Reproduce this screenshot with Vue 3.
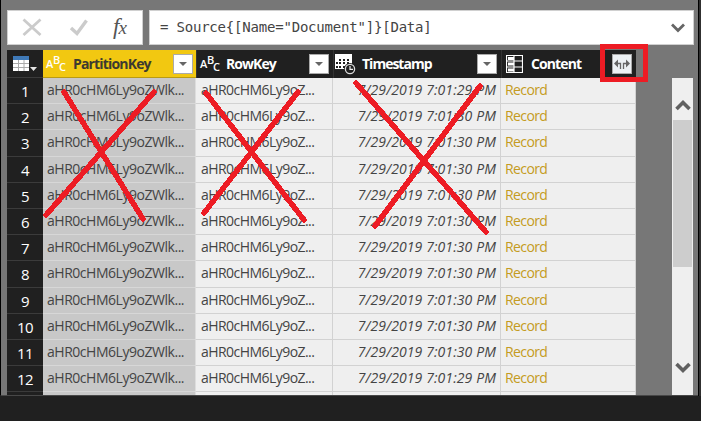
<script setup>
const heights = [26, 26, 27, 26, 26, 26, 26, 27, 26, 26, 26, 26]
const rows = heights.map((h, i) => ({
  n: i + 1,
  h,
  time: i === 0 || i === 11 ? '7/29/2019 7:01:29 PM' : '7/29/2019 7:01:30 PM',
}))
const strokes = [
  'M64 92L143 219', 'M154 92L46 215',
  'M206 93L304 220', 'M298 92L204 213',
  'M356 83L486 232', 'M480 86L375 226',
]
</script>

<template>
  <main class="window">
    <section class="panel">
      <div class="formula">
        <div class="tools">
          <svg width="131" height="33" viewBox="0 0 131 33">
            <path d="M15.5 8.5L32.5 24M32.5 8.5L15.5 24" fill="none" stroke="#cbcbcb" stroke-width="2.8" />
            <path d="M63 17L69 22.5L78.5 9.5" fill="none" stroke="#cbcbcb" stroke-width="3.4" />
          </svg>
          <span class="fx">f<span>x</span></span>
        </div>
        <div class="expression">
          <span class="code">= Source{[Name="Document"]}[Data]</span>
          <svg width="14" height="10" viewBox="0 0 14 10"><path d="M1 1.5L7 7.5L13 1.5" fill="none" stroke="#666" stroke-width="2.8" /></svg>
        </div>
      </div>

      <div class="content">
        <div class="table">
          <div class="row head">
            <div class="num corner">
              <svg width="26" height="20" viewBox="0 0 26 20">
                <path d="M1 2H17V17H1Z" fill="#fff" />
                <path d="M1 2H17V6H1Z" fill="#3f79b7" />
                <path d="M1 9.5H17M1 13.5H17M6.5 6V17M12 6V17" stroke="#aaa" />
                <path d="M18 13H25L21.5 17Z" fill="#e5e5e5" />
              </svg>
            </div>
            <div class="th key">
              <span class="abc"><i>A</i><i>B</i><i>C</i></span>
              <b class="t1">PartitionKey</b><span class="drop"></span>
            </div>
            <div class="th c2">
              <span class="abc"><i>A</i><i>B</i><i>C</i></span>
              <b class="t2">RowKey</b><span class="drop"></span>
            </div>
            <div class="th c3">
              <svg class="cal" width="21" height="21" viewBox="0 0 21 21">
                <path d="M0 0H17V15H0Z" fill="#fff" />
                <path d="M4 5h2v2H4zM8 5h2v2H8zM12 5h2v2h-2zM1 8h2v2H1zM4 8h2v2H4zM8 8h2v2H8zM12 8h2v2h-2zM1 12h2v2H1zM4 12h2v2H4zM8 12h2v2H8z" fill="#202020" />
                <circle cx="15" cy="15" r="6" fill="#202020" />
                <circle cx="15" cy="15" r="4.6" fill="#202020" stroke="#ddd" stroke-width="1.3" />
                <path d="M15 12V15.4H18" fill="none" stroke="#eee" stroke-width="1.2" />
              </svg>
              <b class="t3">Timestamp</b><span class="drop"></span>
            </div>
            <div class="th c4">
              <svg class="record" width="17" height="18" viewBox="0 0 17 18">
                <path d="M.5 .5H16.5V17.5H.5ZM8 .5V17.5M.5 6H16.5M.5 12H16.5" fill="none" stroke="#fff" stroke-width="1.2" />
                <path d="M2 2h6v3H2zM2 7.5h6v3H2zM2 13.5h6v3H2z" fill="#fff" />
              </svg>
              <b class="t4">Content</b>
              <span class="expand">
                <svg width="18" height="18" viewBox="0 0 18 18">
                  <path d="M1 8.5L5 4.5V12.5ZM17 8.5L13 4.5V12.5Z" fill="#666" />
                  <path d="M4 8.5H7.5V14M14 8.5H10.5V14" fill="none" stroke="#666" stroke-width="1.3" />
                </svg>
              </span>
            </div>
          </div>

          <div v-for="r in rows" :key="r.n" class="row" :style="{ height: r.h + 'px' }">
            <div class="num">{{ r.n }}</div>
            <div class="td key"><span>aHR0cHM6Ly9oZWlk...</span></div>
            <div class="td c2"><span>aHR0cHM6Ly9oZ...</span></div>
            <div class="td c3"><span>{{ r.time }}</span></div>
            <div class="td c4"><span>Record</span></div>
          </div>
          <div class="row rest">
            <div class="num"></div><div class="td key"></div><div class="td c2"></div><div class="td c3"></div><div class="td c4"></div>
          </div>
        </div>

        <div class="scrollbar">
          <svg width="16" height="12" viewBox="0 0 16 12"><path d="M1.5 10L8 3.5L14.5 10" fill="none" stroke="#606060" stroke-width="3.6" /></svg>
          <div class="thumb"></div>
          <svg class="down" width="16" height="12" viewBox="0 0 16 12"><path d="M1.5 2L8 8.5L14.5 2" fill="none" stroke="#606060" stroke-width="3.6" /></svg>
        </div>
      </div>
    </section>

    <svg class="marks" width="701" height="421" viewBox="0 0 701 421">
      <path v-for="d in strokes" :key="d" :d="d" />
      <rect x="602.5" y="46.5" width="43" height="33" />
    </svg>
  </main>
</template>

<style>
body { margin: 0; background: #202020; }
</style>

<style scoped>
* { box-sizing: border-box; }
.window { position: relative; width: 701px; height: 421px; overflow: hidden; background: #202020; font-family: "Open Sans", "Noto Sans", sans-serif; }
.panel { width: 698px; height: 396px; padding: 10px 5px 0 6px; background: #777; border-left: 1px solid #000; border-bottom: 1px solid #484848; overflow: hidden; }
.window::after { content: ""; position: absolute; left: 698px; top: 0; width: 3px; height: 396px; background: #303030; border-left: 1px solid #000; }
.formula { display: flex; gap: 6px; height: 40px; }
.tools, .expression { height: 35px; background: #fff; border: 1px solid #d0d0d0; }
.tools { display: flex; position: relative; width: 136px; }
.expression { display: flex; align-items: center; flex: 1; justify-content: space-between; padding: 0 8px 0 10px; margin-right: -1px; }
.fx { position: absolute; left: 105px; top: 0; font: italic 23px/31px "Liberation Serif", serif; color: #555; }
.fx span { font-size: 19px; margin-left: -1px; }
.code { font: 14px/33px "DejaVu Sans Mono", monospace; color: #444; letter-spacing: -.2px; white-space: pre; }
.content { display: flex; justify-content: space-between; height: 345px; }
.table { width: 629px; background: #efefef; }
.row { display: flex; }
.head { height: 28px; background: #202020; }
.num { width: 36px; flex: none; background: #202020; color: #fff; font: 15px/27px "Open Sans", sans-serif; letter-spacing: -.6px; text-align: center; border-bottom: 1px solid #3b3b3b; }
.corner { padding: 4px 0 0 5px; text-align: left; line-height: 0; }
.key { width: 153px; }
.c2 { width: 137px; }
.c3 { width: 168px; }
.c4 { width: 135px; }
.th { display: flex; flex: none; align-items: center; height: 28px; color: #fff; border-left: 1px solid #333; }
.th.key { background: #f2c811; color: #3c3a30; border: 0; border-bottom: 1px solid #b99b14; }
.th b { font-size: 14px; line-height: 28px; font-weight: 700; white-space: nowrap; }
.t1 { letter-spacing: -.83px; margin-left: 8px; }
.t2 { letter-spacing: -.95px; margin-left: 7px; }
.t3 { letter-spacing: -1px; margin-left: 6px; }
.t4 { letter-spacing: -.9px; margin-left: 8px; }
.abc { display: flex; width: 19px; margin-left: 3px; color: #fff; font-size: 11px; font-weight: 600; line-height: 14px; }
.abc i { font-style: normal; width: 6px; }
.abc i:first-child { width: 7px; }
.abc i:nth-child(2) { transform: translateY(-4px); }
.abc i:nth-child(3) { transform: translateY(3px); }
.drop, .expand { width: 20px; height: 20px; margin-left: auto; margin-right: 3px; background: #fff; border: 1px solid #aaa; }
.drop { display: flex; align-items: center; justify-content: center; }
.drop::after { content: ""; border: 4px solid transparent; border-top-color: #666; border-bottom: 0; }
.c2 .drop, .c3 .drop { margin-right: 4px; }
.cal { margin-left: 1px; }
.record { margin-left: 4px; }
.expand { line-height: 0; background: #edf1f4; margin-right: 4px; }
.td { flex: none; color: #444; font-size: 14px; line-height: 24px; white-space: nowrap; border-right: 1px solid #d2d2d2; border-bottom: 1px solid #d2d2d2; padding-left: 4px; overflow: hidden; }
.td.key { background: #c8c8c8; border-right-color: #ddd; border-bottom-color: #d7d7d7; letter-spacing: -.47px; }
.td.c2 { padding-left: 5px; letter-spacing: -.55px; }
.td.c3 { text-align: right; padding: 0 4px 0 0; font-style: italic; letter-spacing: .1px; }
.td.c4 { color: #c49b22; letter-spacing: -.6px; }
.rest { height: 5px; }
.scrollbar { display: flex; flex-direction: column; align-items: center; width: 21px; height: 317px; margin-top: 28px; padding-top: 21px; background: #efefef; }
.thumb { width: 19px; height: 147px; margin-top: 9px; background: #cdcdcd; }
.down { margin-top: 95px; }
.marks { position: absolute; left: 0; top: 0; z-index: 2; }
.marks path { fill: none; stroke: #ed1c24; stroke-width: 5.5; stroke-linecap: round; shape-rendering: crispEdges; }
.marks rect { fill: none; stroke: #ed1c24; stroke-width: 5; }
</style>
